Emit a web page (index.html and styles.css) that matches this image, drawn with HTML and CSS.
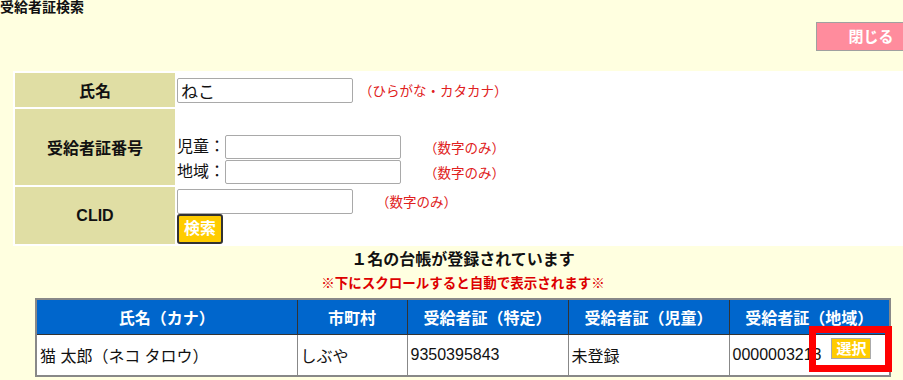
FILE: index.html
```html
<!DOCTYPE html>
<html lang="ja">
<head>
<meta charset="utf-8">
<title>受給者証検索</title>
<link rel="stylesheet" href="styles.css">
</head>
<body>
<div class="page">
  <h1 class="title">受給者証検索</h1>
  <div class="close-row"><button class="btn-close" type="button">閉じる</button></div>

  <table class="search">
    <tr class="r-name">
      <th>氏名</th>
      <td>
        <div class="line">
          <input class="txt" type="text" value="ねこ">
          <span class="hint hint-near">（ひらがな・カタカナ）</span>
        </div>
      </td>
    </tr>
    <tr class="r-num">
      <th>受給者証番号</th>
      <td class="bottom">
        <div class="line"><span class="lbl">児童：</span><input class="txt txt-n" type="text"><span class="hint">（数字のみ）</span></div>
        <div class="line"><span class="lbl">地域：</span><input class="txt txt-n" type="text"><span class="hint">（数字のみ）</span></div>
      </td>
    </tr>
    <tr class="r-clid">
      <th class="latin">CLID</th>
      <td class="top">
        <div class="line"><input class="txt" type="text"><span class="hint hint-far">（数字のみ）</span></div>
        <button class="btn-search" type="button">検索</button>
      </td>
    </tr>
  </table>

  <p class="count">１名の台帳が登録されています</p>
  <p class="notice">※下にスクロールすると自動で表示されます※</p>

  <table class="result">
    <colgroup>
      <col class="c1"><col class="c2"><col class="c3"><col class="c4"><col class="c5">
    </colgroup>
    <thead>
      <tr>
        <th>氏名（カナ）</th>
        <th>市町村</th>
        <th>受給者証（特定）</th>
        <th>受給者証（児童）</th>
        <th>受給者証（地域）</th>
      </tr>
    </thead>
    <tbody>
      <tr>
        <td>猫 太郎（ネコ タロウ）</td>
        <td>しぶや</td>
        <td>9350395843</td>
        <td>未登録</td>
        <td>
          <div class="sel-cell">
            <span>0000003213</span>
            <span class="sel-wrap"><button class="btn-select" type="button">選択</button><span class="mark"></span></span>
          </div>
        </td>
      </tr>
    </tbody>
  </table>
</div>
</body>
</html>
```

FILE: styles.css
```css
html, body {
  margin: 0;
  padding: 0;
  background: #ffffe0;
  overflow: hidden;
}

body {
  font-family: "Liberation Sans", "Noto Sans CJK JP", sans-serif;
  color: #111;
}

.page {
  width: 926px;
}

.title {
  margin: 0;
  font-size: 14px;
  line-height: 14px;
  font-weight: bold;
}

.close-row {
  display: flex;
  justify-content: flex-end;
  margin-top: 8px;
}

.btn-close {
  width: 110px;
  height: 29px;
  background: #ff8c9d;
  border: 1px solid #a0a0a0;
  color: #fff;
  font-family: inherit;
  font-size: 15px;
  font-weight: bold;
  padding: 0;
  line-height: 1;
}

/* search form */
.search {
  margin: 20px 13px 0;
  width: 900px;
  background: #fff;
  border-spacing: 2px;
}

.search th {
  width: 160px;
  background: #e0dea4;
  font-size: 16px;
  font-weight: bold;
  padding: 0;
}

.search td {
  padding: 0;
  vertical-align: middle;
}

.search td.bottom {
  vertical-align: bottom;
  padding-bottom: 1px;
}

.search td.top {
  vertical-align: top;
  padding-top: 2px;
}

.r-name { height: 34px; }
.r-num { height: 76px; }
.r-clid { height: 56px; }

.line {
  display: flex;
  align-items: center;
  height: 24px;
}

.line + .line {
  margin-top: 1px;
}

.lbl {
  font-size: 16px;
  line-height: 24px;
}

.txt {
  box-sizing: border-box;
  width: 176px;
  height: 25px;
  border: 1px solid #a9a9a9;
  border-radius: 2px;
  padding: 0 3px;
  margin: 0;
  font-family: inherit;
  font-size: 17px;
  color: #111;
  background: #fff;
}

.txt-n {
  width: 176px;
  height: 24px;
}

.hint {
  color: #e02020;
  font-size: 13.5px;
  margin-left: 23px;
}

.hint-near { margin-left: 6px; }
.hint-far { margin-left: 23px; }

.btn-search {
  display: block;
  box-sizing: border-box;
  width: 46px;
  height: 30px;
  margin: 1px 0 0;
  padding: 0;
  background: #ffcc00;
  border: 2px solid #333;
  border-radius: 3px;
  color: #fff;
  font-family: inherit;
  font-size: 16px;
  font-weight: bold;
  line-height: 1;
}

/* messages */
.count {
  margin: 4px 0 0;
  text-align: center;
  font-size: 16px;
  line-height: 20px;
  font-weight: bold;
}

.notice {
  margin: 5px 0 0;
  text-align: center;
  font-size: 13.5px;
  line-height: 18px;
  font-weight: bold;
  color: #dd0000;
}

/* result table */
.result {
  margin: 5px auto 0;
  width: 854px;
  table-layout: fixed;
  border-collapse: collapse;
  border: 2px solid #888;
  background: #fff;
}

.c1 { width: 261px; }
.c2 { width: 110px; }
.c3 { width: 161px; }
.c4 { width: 161px; }
.c5 { width: 161px; }

.result th {
  height: 34px;
  padding: 0;
  background: #0066cc;
  color: #fff;
  font-size: 16px;
  font-weight: bold;
  border: 1px solid #333;
  text-align: center;
}

.result td {
  height: 40px;
  padding: 0 0 0 3px;
  font-size: 16px;
  border: 1px solid #888;
  text-align: left;
}

.sel-cell {
  display: flex;
  align-items: center;
  gap: 10px;
  white-space: nowrap;
}

.sel-wrap {
  position: relative;
  margin-bottom: 14px;
}

.btn-select {
  display: block;
  box-sizing: border-box;
  width: 40px;
  height: 21px;
  padding: 0;
  margin: 0;
  background: #ffcc00;
  border: 1px solid #aaa;
  color: #fff;
  font-family: inherit;
  font-size: 15px;
  font-weight: bold;
  line-height: 1;
}

.mark {
  position: absolute;
  left: -22px;
  top: -12px;
  width: 83px;
  height: 46px;
  box-sizing: border-box;
  border: 7px solid #ff0000;
}
```
